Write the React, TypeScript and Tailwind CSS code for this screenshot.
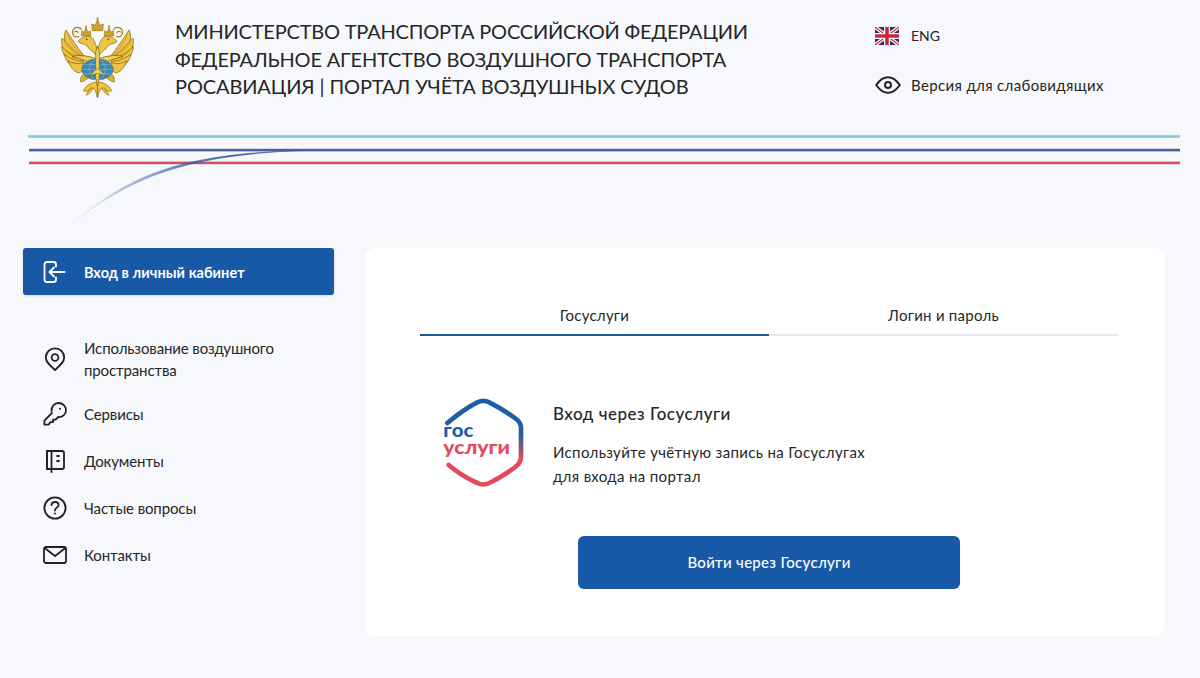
import React from "react";

const feathers = [
  "M134 170 C110 140 92 112 78 90 C70 106 72 128 86 146 C100 162 118 172 134 170Z",
  "M134 174 C106 158 84 136 66 114 C62 132 70 154 86 168 C100 180 120 182 134 174Z",
  "M134 178 C106 172 84 158 65 140 C66 158 78 176 92 186 C106 194 124 192 134 178Z",
  "M132 184 C108 184 88 174 72 162 C76 180 88 196 102 202 C116 206 128 198 132 184Z",
  "M132 188 C114 194 98 190 84 182 C90 200 102 214 114 218 C126 220 132 206 132 188Z",
];

function EmblemHalf() {
  return (
    <g>
      {feathers.map((d, i) => (
        <path key={i} d={d} fill="#efc445" stroke="#8f6b10" strokeWidth="2.4" strokeLinejoin="round" />
      ))}
      <path d="M84 104 C92 128 108 150 128 164 M74 130 C90 150 108 164 128 170 M76 152 C90 166 108 176 128 178" stroke="#b98c1a" strokeWidth="2" fill="none" />
      {/* curl / tongue */}
      <path d="M116 110 C100 114 94 100 100 88 C106 80 120 80 124 88 M104 96 C108 92 114 94 114 98" stroke="#a67e18" strokeWidth="3.5" fill="none" strokeLinecap="round" />
      {/* small crown */}
      <path d="M124 108 L125 92 L133 97 L138 82 L143 97 L151 92 L152 108Z" fill="#d2a42a" stroke="#8f6b10" strokeWidth="1.8" strokeLinejoin="round" />
      <circle cx="138" cy="80" r="3.2" fill="#b98d1c" />
      {/* neck and head */}
      <path d="M170 168 C158 152 144 146 138 134 C132 132 122 132 114 124 C122 114 136 108 148 109 C160 112 164 124 168 136 C170 146 172 156 172 168Z" fill="#efc445" stroke="#8f6b10" strokeWidth="2.2" strokeLinejoin="round" />
      <circle cx="140" cy="118" r="2.4" fill="#4d3908" />
      {/* plane wing */}
      <path d="M168 198 C148 186 124 176 96 170 C112 164 142 166 168 176Z" fill="#f4d056" stroke="#7f5e0e" strokeWidth="2.4" strokeLinejoin="round" />
      {/* claw */}
      <path d="M134 220 C124 224 120 236 122 246 C132 244 142 240 148 228Z" fill="#dcb034" stroke="#8f6b10" strokeWidth="2" strokeLinejoin="round" />
      {/* tail */}
      <path d="M172 292 C170 280 166 270 160 264 C150 272 138 276 130 272 C134 264 144 250 168 246 L172 246Z" fill="#efc445" stroke="#8f6b10" strokeWidth="2.2" strokeLinejoin="round" />
      <path d="M160 264 C152 278 146 284 138 286 C142 278 146 270 150 264Z" fill="#e2b738" stroke="#8f6b10" strokeWidth="1.6" />
    </g>
  );
}

function Emblem() {
  return (
    <svg width="120" height="110" viewBox="0 0 360 330" className="shrink-0">
      <EmblemHalf />
      <g transform="translate(345 0) scale(-1 1)">
        <EmblemHalf />
      </g>
      {/* globe */}
      <ellipse cx="172.5" cy="208" rx="48" ry="32" fill="#3a89b4" stroke="#a67e18" strokeWidth="2.2" />
      <g stroke="#8fc5dc" strokeWidth="1.6" fill="none">
        <path d="M126 208 H219 M131 194 H214 M131 222 H214" />
        <ellipse cx="172.5" cy="208" rx="24" ry="32" />
      </g>
      {/* central crown */}
      <path d="M157 92 L155 72 L165 76 L172.5 60 L180 76 L190 72 L188 92Z" fill="#d2a42a" stroke="#8f6b10" strokeWidth="1.8" strokeLinejoin="round" />
      <rect x="170" y="52" width="5" height="10" fill="#b98d1c" />
      {/* fuselage */}
      <path d="M172.5 138 L178 156 L178 232 L172.5 258 L167 232 L167 156Z" fill="#f4d056" stroke="#7f5e0e" strokeWidth="2" strokeLinejoin="round" />
      <path d="M172.5 205 L197 226 L172.5 220 L148 226Z" fill="#f4d056" stroke="#7f5e0e" strokeWidth="1.6" strokeLinejoin="round" />
    </svg>
  );
}

function Flag() {
  return (
    <svg width="24" height="18" viewBox="0 0 60 45" className="shrink-0">
      <rect width="60" height="45" fill="#2b2f6b" />
      <path d="M0 0 L60 45 M60 0 L0 45" stroke="#fff" strokeWidth="9" />
      <path d="M0 0 L60 45 M60 0 L0 45" stroke="#c8283e" strokeWidth="3" />
      <path d="M30 0 V45 M0 22.5 H60" stroke="#fff" strokeWidth="15" />
      <path d="M30 0 V45 M0 22.5 H60" stroke="#c8283e" strokeWidth="9" />
    </svg>
  );
}

function Eye() {
  return (
    <svg width="26" height="18" viewBox="0 0 26 18" fill="none" stroke="#222" strokeWidth="2" className="shrink-0">
      <path d="M1.2 9 C5 3.5 9 1.2 13 1.2 C17 1.2 21 3.5 24.8 9 C21 14.5 17 16.8 13 16.8 C9 16.8 5 14.5 1.2 9Z" />
      <circle cx="13" cy="9" r="3" />
    </svg>
  );
}

function Decoration() {
  return (
    <svg width="1200" height="112" viewBox="0 0 1200 112" className="block">
      <defs>
        <linearGradient id="swoosh" gradientUnits="userSpaceOnUse" x1="65" y1="100" x2="300" y2="20">
          <stop offset="0" stopColor="#2f5aa0" stopOpacity="0" />
          <stop offset="0.15" stopColor="#2f5aa0" stopOpacity="0.12" />
          <stop offset="0.45" stopColor="#2f5aa0" stopOpacity="0.6" />
          <stop offset="0.75" stopColor="#2f5aa0" stopOpacity="0.95" />
          <stop offset="1" stopColor="#3a5c9c" stopOpacity="1" />
        </linearGradient>
      </defs>
      <rect x="28" y="5.2" width="1152" height="2.6" fill="#80cbd5" />
      <rect x="29" y="18.8" width="1151" height="2.6" fill="#4a5f9c" />
      <rect x="29" y="31.6" width="1151" height="2.6" fill="#d44f60" />
      <path d="M65 99 C125 49 170 24 300 20.5 C172 26.5 125 52 65 99Z" fill="url(#swoosh)" stroke="url(#swoosh)" strokeWidth="0.4" />
    </svg>
  );
}

const blue = "bg-[#1758a7]";

function LoginIcon() {
  return (
    <svg width="24" height="24" viewBox="0 0 24 24" fill="none" stroke="#fff" strokeWidth="1.8" strokeLinecap="round" strokeLinejoin="round">
      <path d="M14 6.5 V4.5 A2.5 2.5 0 0 0 11.5 2 H5 A2.5 2.5 0 0 0 2.5 4.5 V19.5 A2.5 2.5 0 0 0 5 22 H11.5 A2.5 2.5 0 0 0 14 19.5 V17.5" />
      <path d="M22.5 12 H7.5 M12 7.5 L7.5 12 L12 16.5" />
    </svg>
  );
}

function Pin() {
  return (
    <svg width="24" height="24" viewBox="0 0 24 24" fill="none" stroke="#222" strokeWidth="1.8" strokeLinejoin="round">
      <path d="M12 23 C7 18.5 2.8 15 2.8 10.5 A9.2 9.2 0 0 1 21.2 10.5 C21.2 15 17 18.5 12 23Z" />
      <circle cx="12" cy="10.5" r="3.4" />
    </svg>
  );
}

function Key() {
  return (
    <svg width="24" height="24" viewBox="0 0 24 24" fill="none" stroke="#222" strokeWidth="1.8" strokeLinejoin="round" strokeLinecap="round">
      <path d="M8.5 9 C8.2 4.5 11.5 1 15.5 1 C19.8 1 23 4.4 23 8.2 C23 12.4 19.5 15.4 15.2 15 L12.6 17.6 H10 V20.2 H7.4 L5.6 22.6 H1.4 V18.6 L8.9 11" />
      <circle cx="17" cy="6.8" r="1" fill="#222" stroke="none" />
    </svg>
  );
}

function Doc() {
  return (
    <svg width="24" height="24" viewBox="0 0 24 24" fill="none" stroke="#222" strokeWidth="1.8" strokeLinejoin="round" strokeLinecap="round">
      <path d="M4 2 H19 A2 2 0 0 1 21 4 V18 A2 2 0 0 1 19 20 H4 Z" />
      <path d="M4 2 V20 M8.5 2 V23" />
      <path d="M14 7 H16 M14 12 H16" />
    </svg>
  );
}

function Help() {
  return (
    <svg width="24" height="24" viewBox="0 0 24 24" fill="none" stroke="#222" strokeWidth="1.8" strokeLinecap="round">
      <circle cx="12" cy="12" r="10.6" />
      <path d="M8.5 9.2 C8.7 7 10.2 6 12 6 C14 6 15.6 7.2 15.6 9 C15.6 11.5 12 11.8 12 14.4" />
      <circle cx="12" cy="17.6" r="1" fill="#222" stroke="none" />
    </svg>
  );
}

function Mail() {
  return (
    <svg width="24" height="24" viewBox="0 0 24 24" fill="none" stroke="#222" strokeWidth="1.8" strokeLinejoin="round" strokeLinecap="round">
      <rect x="1" y="4" width="22" height="16" rx="2" />
      <path d="M1.6 5 L12 13 L22.4 5" />
    </svg>
  );
}

function GosLogo() {
  return (
    <svg width="110" height="110" viewBox="0 0 330 330" className="shrink-0">
      <defs>
        <linearGradient id="gosg" gradientUnits="userSpaceOnUse" x1="0" y1="45" x2="0" y2="300">
          <stop offset="0" stopColor="#1c5ea8" />
          <stop offset="0.4" stopColor="#22609f" />
          <stop offset="0.7" stopColor="#e5485f" />
          <stop offset="1" stopColor="#e5485f" />
        </linearGradient>
      </defs>
      <path
        d="M52 114 C78 92 110 68 142 52 C154 46 166 46 178 52 C206 66 234 84 256 100 C268 108 273 118 273 130 V214 C273 228 268 238 256 246 C232 264 206 280 178 294 C166 300 154 300 142 294 C110 280 82 262 56 240"
        fill="none"
        stroke="url(#gosg)"
        strokeWidth="14"
        strokeLinecap="round"
        strokeLinejoin="round"
      />
      <text x="40" y="156" fontFamily="Lato, sans-serif" fontWeight="900" fontSize="56" textLength="90" lengthAdjust="spacingAndGlyphs" fill="#1c5ea8">гос</text>
      <text x="40" y="206" fontFamily="Lato, sans-serif" fontWeight="900" fontSize="56" textLength="200" lengthAdjust="spacingAndGlyphs" fill="#e5485f">услуги</text>
    </svg>
  );
}

const menu: { icon: React.ReactNode; label: string }[] = [
  { icon: <Key />, label: "Сервисы" },
  { icon: <Doc />, label: "Документы" },
  { icon: <Help />, label: "Частые вопросы" },
  { icon: <Mail />, label: "Контакты" },
];

export default function App() {
  return (
    <div className="w-[1200px] h-[678px] overflow-hidden bg-[#f7f8fc] text-[#262626]" style={{ fontFamily: "Lato, 'Noto Sans', sans-serif" }}>
      <header className="flex h-[130px] pl-[40px]">
        <Emblem />
        <div className="ml-[15px] pt-[18px] w-[700px] text-[20px] leading-[27.5px] tracking-[-0.2px] text-[#262626]">
          <div>МИНИСТЕРСТВО ТРАНСПОРТА РОССИЙСКОЙ ФЕДЕРАЦИИ</div>
          <div className="tracking-[-0.18px]">ФЕДЕРАЛЬНОЕ АГЕНТСТВО ВОЗДУШНОГО ТРАНСПОРТА</div>
          <div className="tracking-[-0.12px]">РОСАВИАЦИЯ | ПОРТАЛ УЧЁТА ВОЗДУШНЫХ СУДОВ</div>
        </div>
        <div className="flex flex-col gap-[31px] pt-[27px] text-[15px] leading-[18px]">
          <div className="flex items-center gap-[11px]">
            <Flag />
            <span className="ml-[1px] text-[14px]">ENG</span>
          </div>
          <div className="flex items-center gap-[10px]">
            <Eye />
            <span className="tracking-[0.35px]">Версия для слабовидящих</span>
          </div>
        </div>
      </header>

      <Decoration />

      <div className="flex pl-[23px] pt-[6px]">
        <aside className="w-[311px] shrink-0">
          <div className={`flex items-center h-[47px] rounded-[3px] ${blue} text-white font-bold text-[14.5px] pl-[19px] gap-[18px] shadow-sm`}>
            <LoginIcon />
            <span className="mt-[2px] tracking-[0.05px]">Вход в личный кабинет</span>
          </div>
          <nav className="mt-[41px] text-[15px] leading-[22.5px] tracking-[-0.12px]">
            <div className="flex items-center h-[46px] pl-[20px] gap-[17px] mb-[8px]">
              <Pin />
              <span>Использование воздушного<br />пространства</span>
            </div>
            {menu.map((m, i) => (
              <div key={i} className="flex items-center h-[47px] pl-[20px] gap-[17px]">
                {m.icon}
                <span className="mt-[1px]">{m.label}</span>
              </div>
            ))}
          </nav>
        </aside>

        <main className="ml-[31px] w-[800px] h-[388px] bg-white rounded-[10px] pl-[55px] pr-[47px] pt-[52px]">
          <div className="flex text-[15px] leading-[30px] h-[36px] tracking-[0.25px]">
            <div className="w-[349px] text-center border-b-[2px] border-[#1c5a94] h-[36px]">Госуслуги</div>
            <div className="w-[349px] text-center border-b-[2px] border-[#e8eaee] h-[36px]">Логин и пароль</div>
          </div>
          <div className="flex mt-[49px] pl-[10px] h-[110px]">
            <GosLogo />
            <div className="ml-[13px] pt-[17px]">
              <div className="text-[17px] leading-[24px] font-medium tracking-[0.5px]">Вход через Госуслуги</div>
              <div className="mt-[15px] text-[15px] leading-[23.5px] tracking-[0.35px]">
                Используйте учётную запись на Госуслугах<br />для входа на портал
              </div>
            </div>
          </div>
          <div className="flex justify-center mt-[41px]">
            <button className={`w-[382px] h-[53px] rounded-[6px] ${blue} text-white text-[15px] font-medium tracking-[0.3px]`}>Войти через Госуслуги</button>
          </div>
        </main>
      </div>
    </div>
  );
}
